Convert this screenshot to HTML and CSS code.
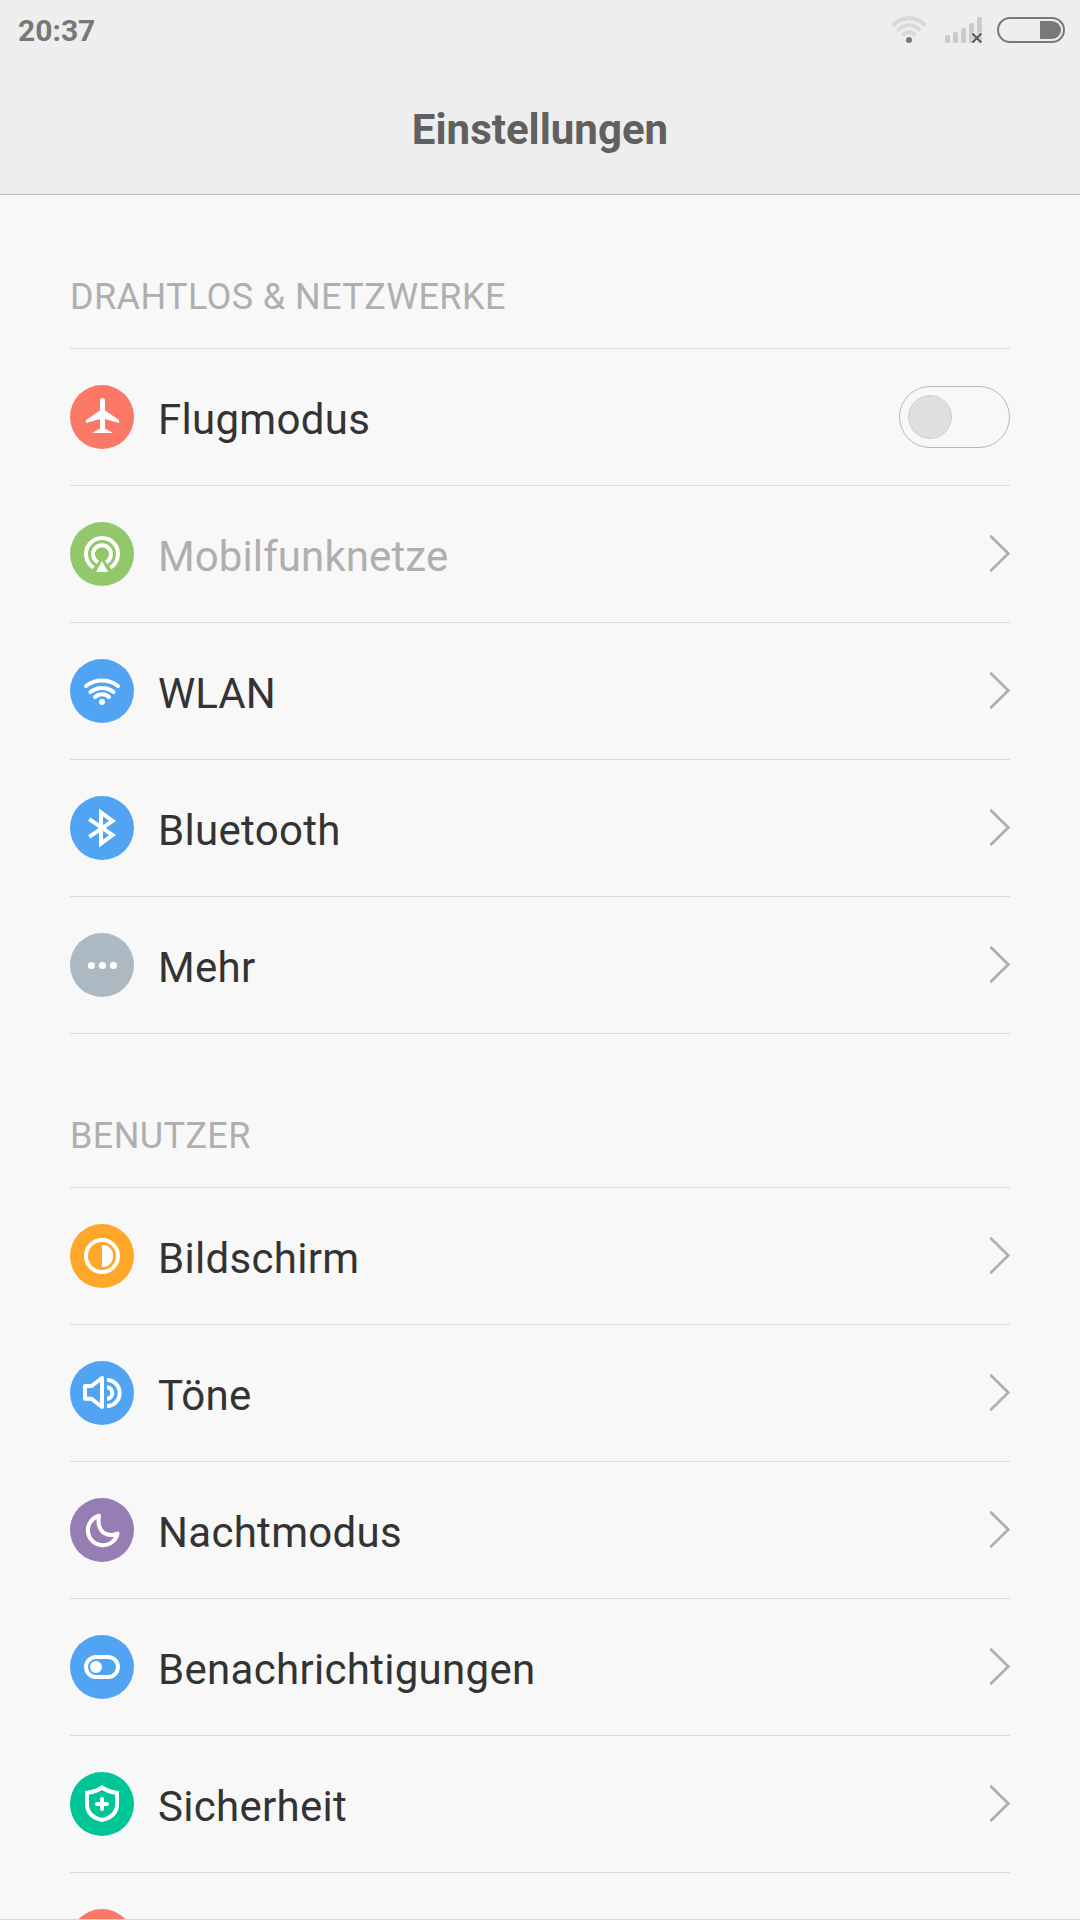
FILE: index.html
```html
<!DOCTYPE html>
<html lang="de">
<head>
    <meta charset="UTF-8">
    <meta name="viewport" content="width=device-width, initial-scale=1.0">
    <title>Einstellungen</title>
    <link rel="stylesheet" href="styles.css">
</head>
<body>
    <header class="header">
        <div class="status-bar">
            <span class="clock">20:37</span>
            <div class="status-icons">
                <svg class="status-wifi" width="36" height="28" viewBox="0 0 36 28">
                    <g fill="none" stroke="#d8d8d8" stroke-width="4">
                        <path d="M1.5 9.5Q8.5 2.2 18 2.2T34.5 9.5"/>
                        <path d="M6.5 14.7Q11.5 9.2 18 9.2T29.5 14.7"/>
                        <path d="M11.5 19.7Q14.5 16.2 18 16.2T24.5 19.7"/>
                    </g>
                    <circle cx="18" cy="24" r="3" fill="#787878"/>
                </svg>
                <svg class="status-signal" width="37" height="28" viewBox="0 0 37 28">
                    <g fill="#cbcbcb">
                        <rect x="0" y="19" width="5" height="8" rx="1.5"/>
                        <rect x="8" y="16" width="5" height="11" rx="1.5"/>
                        <rect x="16" y="12" width="5" height="15" rx="1.5"/>
                        <rect x="24" y="7" width="5" height="20" rx="1.5"/>
                        <rect x="32" y="1" width="5" height="26" rx="1.5"/>
                    </g>
                    <path d="M27 17.2l9.4 9.4M36.4 17.2L27 26.6" stroke="#eee" stroke-width="4"/>
                    <path d="M27.3 17.5l9 9M36.3 17.5l-9 9" stroke="#5c5c5c" stroke-width="2.4"/>
                </svg>
                <div class="battery"><div class="battery-level"></div></div>
            </div>
        </div>
        <h1 class="title">Einstellungen</h1>
    </header>

    <main class="settings">
        <section class="group">
            <h2 class="group-title">DRAHTLOS &amp; NETZWERKE</h2>
            <div class="row">
                <div class="icon coral">
                    <svg viewBox="0 0 64 64"><path fill="#fff" d="M32.5 13a2.5 2.5 0 0 1 2.5 2.5V25.6L49 35V38L35 34V43.8L42 47.2V48H23.2V47.2L30 43.8V34L16 38V35L30 25.6V15.5a2.5 2.5 0 0 1 2.5-2.5z"/></svg>
                </div>
                <span class="label">Flugmodus</span>
                <div class="toggle"><div class="knob"></div></div>
            </div>
            <div class="row disabled">
                <div class="icon green">
                    <svg class="line" viewBox="0 0 64 64">
                        <path d="M23.6 45.6A16 16 0 1 1 40.4 45.6"/>
                        <path d="M28 40.3A9 9 0 1 1 36 40.3"/>
                        <path d="M32 39L38 50H26z" fill="#fff" stroke="none"/>
                    </svg>
                </div>
                <span class="label">Mobilfunknetze</span>
                <svg class="arrow" viewBox="0 0 20 38"><path d="M1 1.5L18.3 18.5L1 35.5"/></svg>
            </div>
            <div class="row">
                <div class="icon blue">
                    <svg class="line round" viewBox="0 0 64 64">
                        <path d="M16 27A26 26 0 0 1 48 27"/>
                        <path d="M20.5 33A18.5 18.5 0 0 1 43.5 33"/>
                        <path d="M25 38A10 10 0 0 1 39 38"/>
                        <circle cx="32" cy="43" r="3" fill="#fff" stroke="none"/>
                    </svg>
                </div>
                <span class="label wide">WLAN</span>
                <svg class="arrow" viewBox="0 0 20 38"><path d="M1 1.5L18.3 18.5L1 35.5"/></svg>
            </div>
            <div class="row">
                <div class="icon blue">
                    <svg class="line" viewBox="0 0 64 64"><path d="M19.2 23.2L42.6 39L31 47.6V16.4L42.6 25L19.2 40.8"/></svg>
                </div>
                <span class="label">Bluetooth</span>
                <svg class="arrow" viewBox="0 0 20 38"><path d="M1 1.5L18.3 18.5L1 35.5"/></svg>
            </div>
            <div class="row">
                <div class="icon gray">
                    <svg viewBox="0 0 64 64" fill="#fff">
                        <circle cx="21.4" cy="32.5" r="3.6"/>
                        <circle cx="32.4" cy="32.5" r="3.6"/>
                        <circle cx="43.4" cy="32.5" r="3.6"/>
                    </svg>
                </div>
                <span class="label">Mehr</span>
                <svg class="arrow" viewBox="0 0 20 38"><path d="M1 1.5L18.3 18.5L1 35.5"/></svg>
            </div>
        </section>

        <section class="group">
            <h2 class="group-title">BENUTZER</h2>
            <div class="row">
                <div class="icon orange">
                    <svg class="line" viewBox="0 0 64 64">
                        <circle cx="32" cy="32" r="16"/>
                        <path d="M32 20.8A11.2 11.2 0 0 1 32 43.2z" fill="#fff" stroke="none"/>
                    </svg>
                </div>
                <span class="label">Bildschirm</span>
                <svg class="arrow" viewBox="0 0 20 38"><path d="M1 1.5L18.3 18.5L1 35.5"/></svg>
            </div>
            <div class="row">
                <div class="icon blue">
                    <svg class="line" viewBox="0 0 64 64">
                        <path d="M15 25H21.5L32 17V46L21.5 37.7H15z" stroke-linejoin="round"/>
                        <path d="M37 19A12.500 12.800 0 0 1 37 45"/>
                        <path d="M37 26.2A5.2 5.8 0 0 1 37 37.8"/>
                    </svg>
                </div>
                <span class="label">Töne</span>
                <svg class="arrow" viewBox="0 0 20 38"><path d="M1 1.5L18.3 18.5L1 35.5"/></svg>
            </div>
            <div class="row">
                <div class="icon purple">
                    <svg class="line round" viewBox="0 0 64 64"><path d="M29 17.8A15 15 0 1 0 47.5 35.5Q40 38.8 34 35Q27 30 29 17.8z"/></svg>
                </div>
                <span class="label">Nachtmodus</span>
                <svg class="arrow" viewBox="0 0 20 38"><path d="M1 1.5L18.3 18.5L1 35.5"/></svg>
            </div>
            <div class="row">
                <div class="icon blue">
                    <svg class="line" viewBox="0 0 64 64">
                        <rect x="16" y="22" width="32" height="20" rx="10"/>
                        <circle cx="26" cy="32" r="6" fill="#fff" stroke="none"/>
                    </svg>
                </div>
                <span class="label">Benachrichtigungen</span>
                <svg class="arrow" viewBox="0 0 20 38"><path d="M1 1.5L18.3 18.5L1 35.5"/></svg>
            </div>
            <div class="row">
                <div class="icon teal">
                    <svg class="line" viewBox="0 0 64 64">
                        <path d="M32 15.5Q26 19.8 17 20.8V32Q17 44.5 32 48Q47 44.5 47 32V20.8Q38 19.8 32 15.5z"/>
                        <path d="M27 32H37M32 27V37" stroke-linecap="round"/>
                    </svg>
                </div>
                <span class="label">Sicherheit</span>
                <svg class="arrow" viewBox="0 0 20 38"><path d="M1 1.5L18.3 18.5L1 35.5"/></svg>
            </div>
            <div class="row">
                <div class="icon coral"></div>
            </div>
        </section>
    </main>
</body>
</html>
```
FILE: styles.css
```css
* {
    margin: 0;
    padding: 0;
    box-sizing: border-box;
}

body {
    font-family: Roboto, sans-serif;
    background: #f8f8f8;
    color: #333;
    height: 1920px;
    display: flex;
    flex-direction: column;
    overflow: hidden;
}

.header {
    flex: none;
    height: 195px;
    background: #eee;
    border-bottom: 1px solid #bdbdbd;
}

.status-bar {
    height: 60px;
    padding: 0 15px 0 18px;
    display: flex;
    justify-content: space-between;
    align-items: center;
}

.clock {
    padding-top: 2px;
    font-size: 30px;
    font-weight: 700;
    line-height: 58px;
    color: #787878;
}

.status-icons {
    display: flex;
    align-items: center;
}

.status-wifi {
    margin-right: 18px;
}

.status-signal {
    margin-right: 15px;
}

.battery {
    width: 68px;
    height: 26px;
    border: 2px solid #787878;
    border-radius: 13px;
    padding: 2px;
    display: flex;
    justify-content: flex-end;
}

.battery-level {
    width: 21px;
    height: 18px;
    background: #787878;
    border-radius: 0 9px 9px 0;
}

.title {
    text-align: center;
    font-size: 42px;
    font-weight: 700;
    line-height: 140px;
    color: #606060;
}

.settings {
    flex: 1;
    min-height: 0;
    overflow: hidden;
    border-bottom: 1px solid #d8d8d8;
}

.group {
    padding: 0 70px;
}

.group-title {
    height: 154px;
    padding-top: 51px;
    font-size: 36px;
    font-weight: 400;
    line-height: 102px;
    letter-spacing: 0.4px;
    color: #afafaf;
    border-bottom: 1px solid #dcdcdc;
}

.row {
    height: 137px;
    display: flex;
    align-items: center;
    border-bottom: 1px solid #dcdcdc;
}

.icon {
    flex: none;
    width: 64px;
    height: 64px;
    border-radius: 50%;
}

.icon svg {
    display: block;
    width: 64px;
    height: 64px;
}

.line {
    fill: none;
    stroke: #fff;
    stroke-width: 4;
}

.round {
    stroke-linecap: round;
    stroke-linejoin: round;
}

.coral { background: #fb7766; }
.green { background: #92c76b; }
.blue { background: #50a4f3; }
.gray { background: #acb8c2; }
.orange { background: #ffa728; }
.purple { background: #967db4; }
.teal { background: #00c596; }

.label {
    flex: 1;
    margin-left: 24px;
    padding-top: 5px;
    font-size: 42px;
    line-height: 50px;
    letter-spacing: 0.3px;
}

.label.wide {
    letter-spacing: 0;
}

.disabled .label {
    color: #afafaf;
    letter-spacing: 0.1px;
}

.arrow {
    width: 20px;
    height: 38px;
    fill: none;
    stroke: #afafaf;
    stroke-width: 2.7;
    stroke-linecap: round;
}

.toggle {
    width: 111px;
    height: 62px;
    padding: 8px;
    border: 1px solid #b8b8b8;
    border-radius: 31px;
}

.knob {
    width: 44px;
    height: 44px;
    background: #dfdfdf;
    border: 1px solid #cfcfcf;
    border-radius: 50%;
}
```
